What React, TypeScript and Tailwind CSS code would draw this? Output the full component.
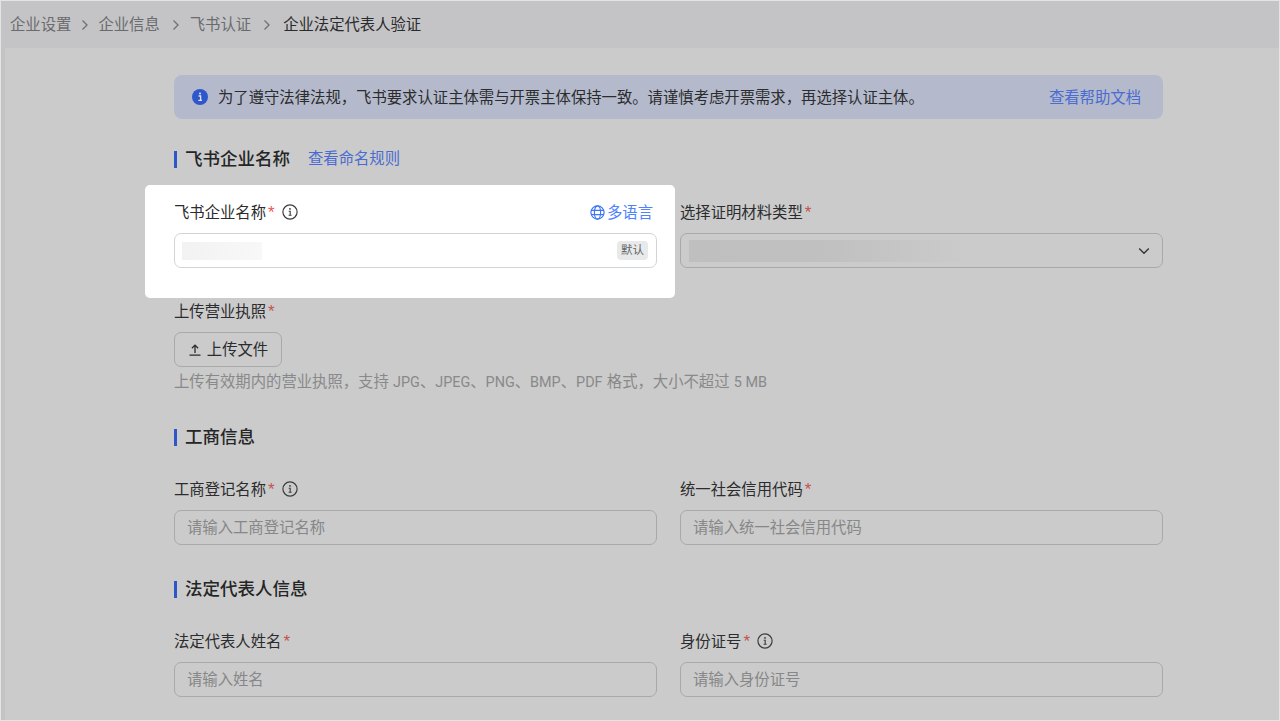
import React from "react";

const FONT = "font-['Liberation_Sans','Noto_Sans_CJK_SC',sans-serif]";

function InfoIcon() {
  return (
    <svg width="16" height="16" viewBox="0 0 16 16" fill="none" className="ml-[7px] shrink-0">
      <circle cx="8" cy="8" r="7.1" stroke="#3c3d3e" strokeWidth="1.2" />
      <circle cx="8" cy="4.9" r="0.9" fill="#3c3d3e" />
      <path d="M6.7 7.2H8.2V11.2M6.6 11.3H9.6" stroke="#3c3d3e" strokeWidth="1.1" />
    </svg>
  );
}

function Chevron() {
  return (
    <svg width="8" height="12" viewBox="0 0 8 12" fill="none" className="shrink-0">
      <path d="M1.5 1.5L6 6L1.5 10.5" stroke="#6f7072" strokeWidth="1.3" />
    </svg>
  );
}

function Label({ text, info, white }: { text: string; info?: boolean; white?: boolean }) {
  return (
    <div className="flex h-[22px] items-center text-[15.35px] leading-[22px] text-[#2b2c2d]">
      <span className="pt-[2px]">{text}</span>
      <span className={`ml-[2px] pt-[2px] text-[17px] ${white ? "text-[#f0574f]" : "text-[#c4534c]"}`}>*</span>
      {info && <InfoIcon />}
    </div>
  );
}

function SectionTitle({ text, link }: { text: string; link?: string }) {
  return (
    <div className="flex h-[24px] items-center">
      <div className="h-[17px] w-[3px] bg-[#2d56c9]" />
      <span className="ml-[8px] text-[17.5px] font-medium leading-[24px] text-[#242526]">{text}</span>
      {link && <span className="ml-[18px] text-[15.35px] leading-[24px] text-[#4a6bd0]">{link}</span>}
    </div>
  );
}

function TextInput({ placeholder }: { placeholder: string }) {
  return (
    <div className="mt-[10px] flex h-[35px] items-center rounded-[7px] border border-[#a9a9aa] px-[12px] text-[15.35px] text-[#868788]">
      {placeholder}
    </div>
  );
}

function Latin({ children }: { children: React.ReactNode }) {
  return <span className="font-['Roboto',sans-serif] text-[14.4px]">{children}</span>;
}

export default function App() {
  return (
    <div className={`flex h-[721px] w-[1280px] flex-col overflow-hidden border border-[#e4e4e4] bg-[#c4c4c6] ${FONT}`}>
      <header className="flex h-[47px] shrink-0 items-center pl-[9px] text-[15.35px] text-[#6a6b6d]">
        <span>企业设置</span>
        <span className="ml-[10px]"><Chevron /></span>
        <span className="ml-[9px]">企业信息</span>
        <span className="ml-[12px]"><Chevron /></span>
        <span className="ml-[10px]">飞书认证</span>
        <span className="ml-[12px]"><Chevron /></span>
        <span className="ml-[12px] text-[#2a2b2c]">企业法定代表人验证</span>
      </header>

      <div className="flex-1 pl-[4px]">
        <main className="h-full bg-[#cbcbcb] pl-[169px] pr-[116px] pt-[27px]">
          <div className="flex h-[44px] items-center justify-between rounded-[8px] bg-[#b4bacb] pl-[18px] pr-[22px] text-[15.35px]">
            <div className="flex items-center">
              <svg width="16" height="16" viewBox="0 0 16 16" className="shrink-0">
                <circle cx="8" cy="8" r="8" fill="#2f57cb" />
                <circle cx="8" cy="4.6" r="1" fill="#dfe3ee" />
                <path d="M6.6 7H8.6V11.2M6.4 11.4H10" stroke="#dfe3ee" strokeWidth="1.3" fill="none" />
              </svg>
              <span className="ml-[10px] pt-[2px] text-[#2b2c2e]">
                为了遵守法律法规，飞书要求认证主体需与开票主体保持一致。请谨慎考虑开票需求，再选择认证主体。
              </span>
            </div>
            <span className="pt-[2px] text-[#4a6bd0]">查看帮助文档</span>
          </div>

          <div className="mt-[28px]">
            <SectionTitle text="飞书企业名称" link="查看命名规则" />
          </div>

          <div className="mt-[30px] grid grid-cols-2 gap-x-[23px]">
            <div className="relative -mb-[30px] -ml-[29px] -mr-[18px] -mt-[16px] rounded-[5px] bg-white pb-[30px] pl-[29px] pr-[18px] pt-[16px]">
              <div className="flex h-[22px] items-center justify-between pr-[4px]">
                <Label text="飞书企业名称" info white />
                <div className="flex items-center text-[15.35px] leading-[22px] text-[#4e83fd]">
                  <svg width="15" height="15" viewBox="0 0 15 15" fill="none" stroke="#3f78f5" strokeWidth="1.2">
                    <circle cx="7.5" cy="7.5" r="6.6" />
                    <ellipse cx="7.5" cy="7.5" rx="3.1" ry="6.6" />
                    <path d="M1 5.4H14M1 9.6H14" />
                  </svg>
                  <span className="ml-[2px] pt-[2px]">多语言</span>
                </div>
              </div>
              <div className="mt-[10px] flex h-[35px] items-center justify-between rounded-[7px] border border-[#d2d4d6] pl-[7px] pr-[8px]">
                <div className="h-[18px] w-[80px] bg-gradient-to-r from-[#f2f2f2] to-[#f8f8f8]" />
                <span className="flex h-[19px] w-[31px] items-center justify-center rounded-[4px] bg-[#e8e9ea] text-[11.5px] text-[#646566]">
                  默认
                </span>
              </div>
            </div>
            <div>
              <Label text="选择证明材料类型" />
              <div className="mt-[10px] flex h-[35px] items-center justify-between rounded-[7px] border border-[#a9a9aa] pl-[8px] pr-[12px]">
                <div className="h-[22px] w-[271px] bg-gradient-to-r from-[#bfbfbf] via-[#c0c0c0] to-[#cacaca]" />
                <svg width="12" height="8" viewBox="0 0 12 8" fill="none">
                  <path d="M1.2 1.5L6 6.2L10.8 1.5" stroke="#35363a" strokeWidth="1.4" />
                </svg>
              </div>
            </div>
          </div>

          <div className="mt-[32px]">
            <Label text="上传营业执照" />
            <div className="mt-[10px] flex h-[35px] w-[108px] items-center justify-center rounded-[7px] border border-[#a9a9aa] text-[15.35px] text-[#2b2c2d]">
              <svg width="14" height="14" viewBox="0 0 14 14" fill="none" stroke="#2b2c2d" strokeWidth="1.3">
                <path d="M7 10V2.2M3.9 5.2L7 2.1L10.1 5.2M1.5 12.2H12.5" />
              </svg>
              <span className="ml-[5px]">上传文件</span>
            </div>
            <div className="mt-[3px] h-[22px] pt-[1px] text-[15.35px] leading-[22px] text-[#88898a]">
              上传有效期内的营业执照，支持 <Latin>JPG</Latin>、<Latin>JPEG</Latin>、<Latin>PNG</Latin>、<Latin>BMP</Latin>、<Latin>PDF</Latin> 格式，大小不超过 <Latin>5 MB</Latin>
            </div>
          </div>

          <div className="mt-[33px]">
            <SectionTitle text="工商信息" />
          </div>

          <div className="mt-[29px] grid grid-cols-2 gap-x-[23px]">
            <div>
              <Label text="工商登记名称" info />
              <TextInput placeholder="请输入工商登记名称" />
            </div>
            <div>
              <Label text="统一社会信用代码" />
              <TextInput placeholder="请输入统一社会信用代码" />
            </div>
          </div>

          <div className="mt-[32px]">
            <SectionTitle text="法定代表人信息" />
          </div>

          <div className="mt-[29px] grid grid-cols-2 gap-x-[23px]">
            <div>
              <Label text="法定代表人姓名" />
              <TextInput placeholder="请输入姓名" />
            </div>
            <div>
              <Label text="身份证号" info />
              <TextInput placeholder="请输入身份证号" />
            </div>
          </div>
        </main>
      </div>
    </div>
  );
}
